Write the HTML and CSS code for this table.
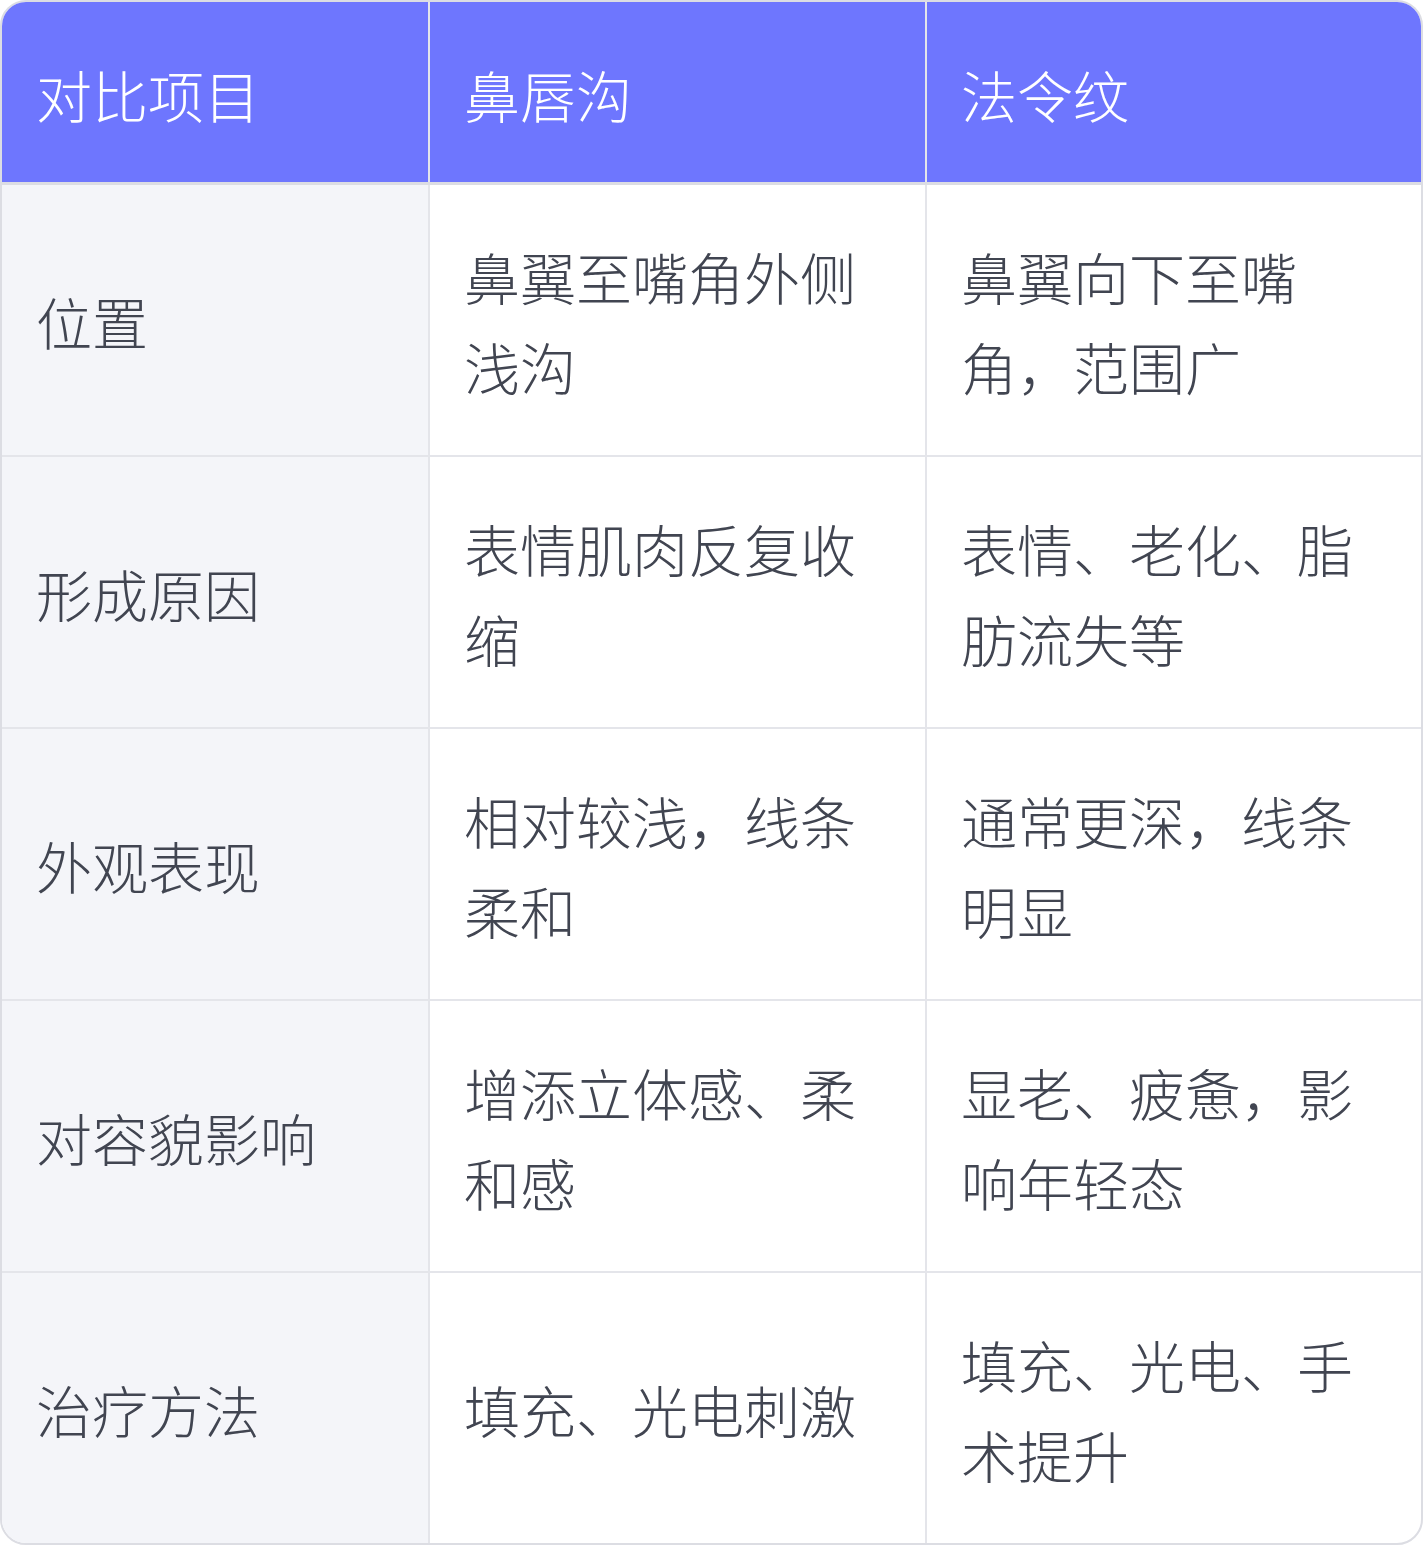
FILE: index.html
```html
<!DOCTYPE html>
<html lang="zh">
<head>
<meta charset="utf-8">
<link rel="stylesheet" href="styles.css">
</head>
<body>
<div class="wrap">
<table class="cmp">
<colgroup><col class="c1"><col class="c2"><col class="c3"></colgroup>
<thead>
<tr><th>对比项目</th><th>鼻唇沟</th><th>法令纹</th></tr>
</thead>
<tbody>
<tr><td class="key">位置</td><td>鼻翼至嘴角外侧浅沟</td><td>鼻翼向下至嘴角，范围广</td></tr>
<tr><td class="key">形成原因</td><td>表情肌肉反复收缩</td><td>表情、老化、脂肪流失等</td></tr>
<tr><td class="key">外观表现</td><td>相对较浅，线条柔和</td><td>通常更深，线条明显</td></tr>
<tr><td class="key">对容貌影响</td><td>增添立体感、柔和感</td><td>显老、疲惫，影响年轻态</td></tr>
<tr><td class="key">治疗方法</td><td>填充、光电刺激</td><td>填充、光电、手术提升</td></tr>
</tbody>
</table>
</div>
</body>
</html>
```
FILE: styles.css
```css
html, body { margin: 0; padding: 0; background: #fff; }
.wrap {
  width: 1423px;
  border: 2px solid #dcdde3;
  border-radius: 26px;
  overflow: hidden;
  box-sizing: border-box;
}
.cmp {
  width: 100%;
  border-collapse: collapse;
  table-layout: fixed;
  font-family: "Noto Sans CJK SC", "Noto Sans", sans-serif;
  font-size: 56px;
  line-height: 90px;
  color: #414551;
}
.c1 { width: 427px; }
.c2 { width: 497px; }
.c3 { width: auto; }
.cmp th, .cmp td {
  border: 2px solid #e4e5ea;
  padding: 46px 35px 44px 34px;
  text-align: left;
  vertical-align: middle;
  font-weight: 300;
}
.cmp thead th { border-top: 0; }
.cmp th:first-child, .cmp td:first-child { border-left: 0; }
.cmp th:last-child, .cmp td:last-child { border-right: 0; }
.cmp tbody tr:last-child td { border-bottom: 0; }
.cmp thead th {
  background: #6e76fe;
  color: #fff;
  padding-top: 47px;
  padding-bottom: 43px;
  border-bottom: 3px solid #dcdde3;
}
.cmp td.key { background: #f4f5f9; }
```
